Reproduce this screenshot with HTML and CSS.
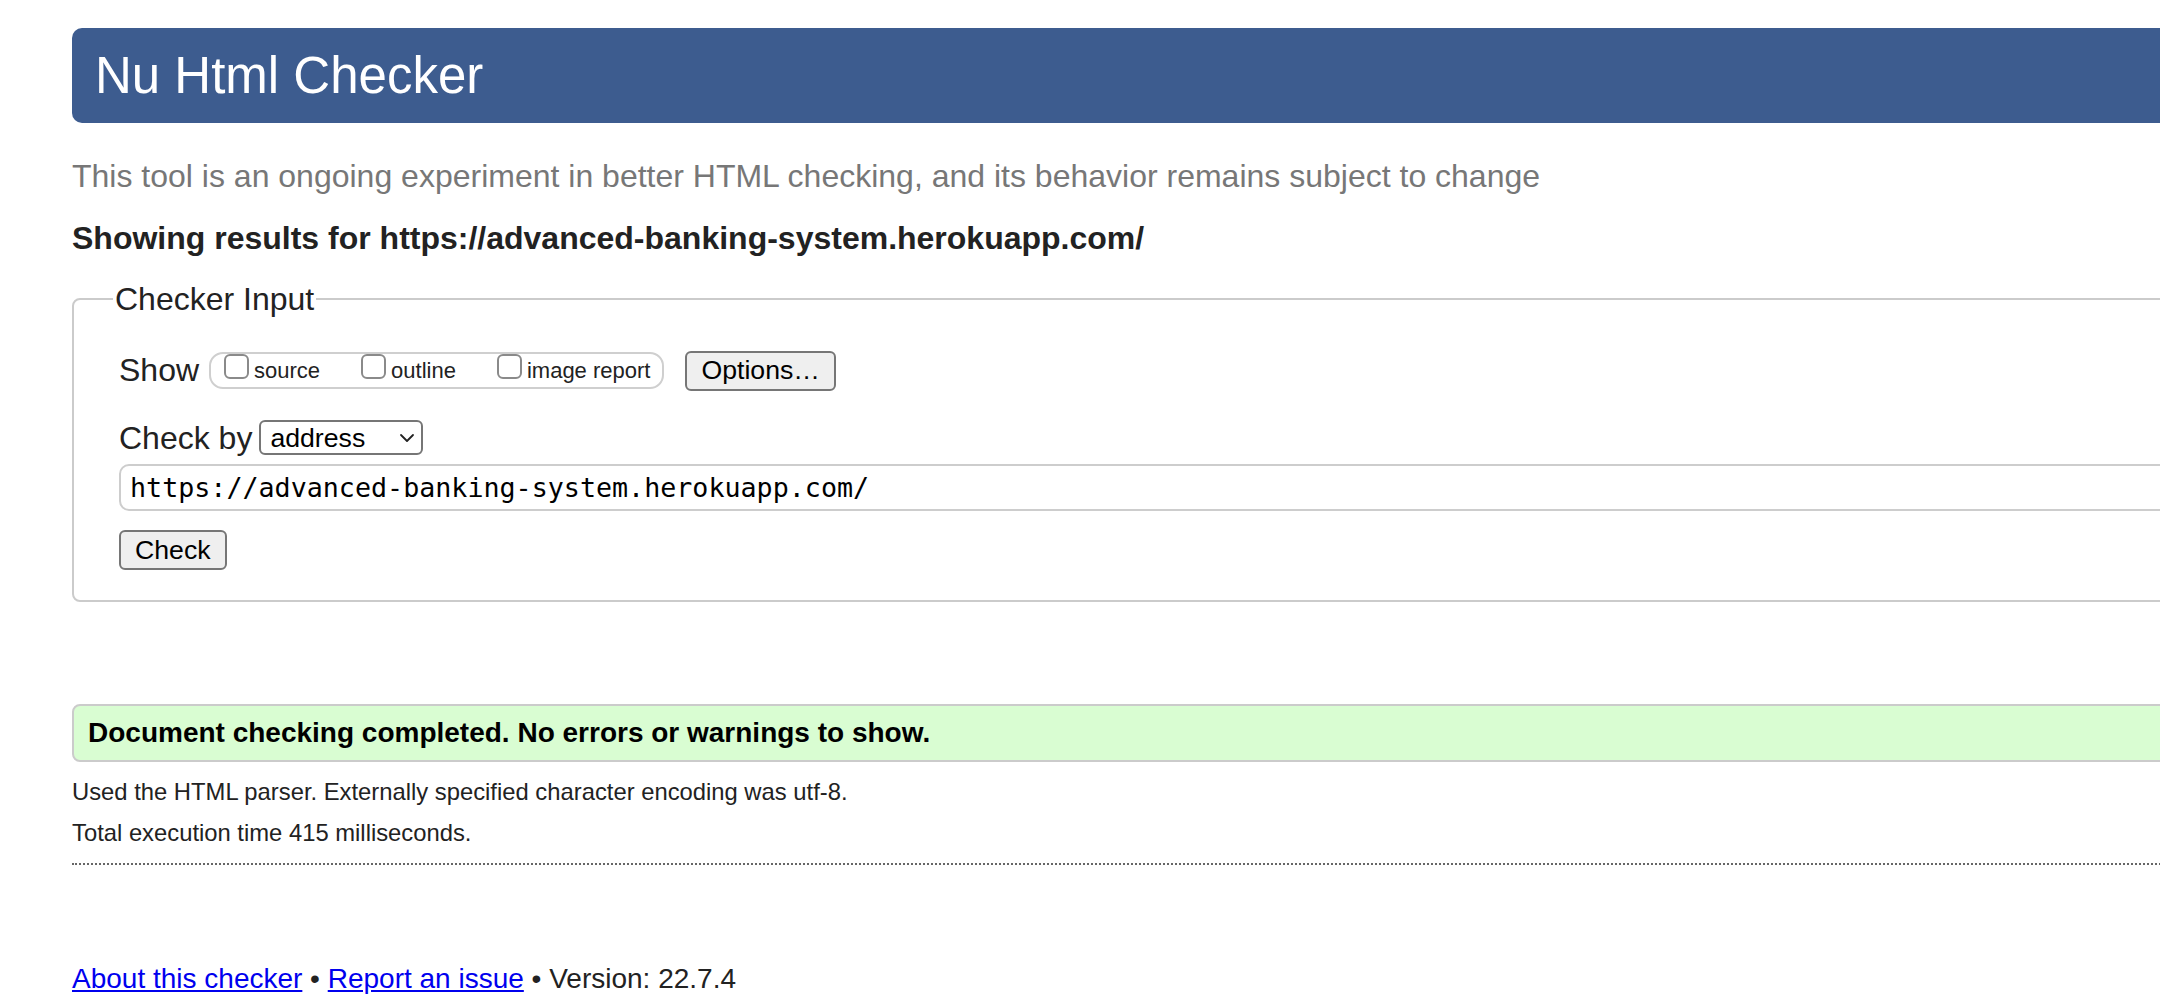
FILE: index.html
```html
<!DOCTYPE html>
<html lang="en">
<head>
<meta charset="utf-8">
<title>Showing results for https://advanced-banking-system.herokuapp.com/ - Nu Html Checker</title>
<link rel="stylesheet" href="styles.css">
</head>
<body>
<div class="page">
  <h1 class="title">Nu Html Checker</h1>
  <p class="intro">This tool is an ongoing experiment in better HTML checking, and its behavior remains subject to change</p>
  <h2 class="showing">Showing results for https://advanced-banking-system.herokuapp.com/</h2>
  <form class="checker-form">
    <fieldset class="checker-input">
      <legend class="checker-legend">Checker Input</legend>
      <div class="row show-row">
        <span class="row-label">Show</span>
        <fieldset class="opts">
          <label class="opt"><input type="checkbox" class="cb"><span class="opt-text">source</span></label>
          <label class="opt"><input type="checkbox" class="cb"><span class="opt-text">outline</span></label>
          <label class="opt"><input type="checkbox" class="cb"><span class="opt-text">image report</span></label>
        </fieldset>
        <button type="button" class="btn btn-options">Options…</button>
      </div>
      <div class="row by-row">
        <span class="row-label">Check by</span>
        <span class="select-wrap">
          <select class="select"><option>address</option></select>
          <svg class="chev" width="16" height="10" viewBox="0 0 16 10"><path d="M2 2 L8 8 L14 2" fill="none" stroke="#222" stroke-width="1.8" stroke-linecap="round" stroke-linejoin="round"/></svg>
        </span>
      </div>
      <div class="url-row">
        <input class="url" type="text" value="https://advanced-banking-system.herokuapp.com/">
      </div>
      <div class="check-row">
        <button type="button" class="btn btn-check">Check</button>
      </div>
    </fieldset>
  </form>
  <div class="success">Document checking completed. No errors or warnings to show.</div>
  <p class="details">Used the HTML parser. Externally specified character encoding was utf-8.</p>
  <p class="details details-2">Total execution time 415 milliseconds.</p>
  <hr class="dotted">
  <p class="footer"><a href="#about" class="flink">About this checker</a> • <a href="#issue" class="flink">Report an issue</a> • Version: 22.7.4</p>
</div>
</body>
</html>
```
FILE: styles.css
```css
html, body {
  margin: 0;
  padding: 0;
  background: #fff;
}
body {
  overflow: hidden;
  font-family: "Liberation Sans", Arial, Helvetica, sans-serif;
  font-size: 32px;
  line-height: 1.15;
  color: #222;
}
.page {
  margin-left: 72px;
  width: 2240px;
}
.title {
  margin: 28px 0 0;
  height: 95px;
  line-height: 95px;
  padding: 0 23px;
  font-size: 51px;
  font-weight: normal;
  color: #fff;
  background: #3d5c8f;
  border-radius: 10px;
}
.intro {
  margin: 34.5px 0 0;
  color: #777;
  font-size: 32px;
}
.showing {
  margin: 25.7px 0 0;
  font-size: 32px;
  font-weight: bold;
  color: #222;
}
.checker-form {
  margin: 24px 0 0;
}
.checker-input {
  margin: 0;
  border: 2px solid #cbcbcb;
  border-radius: 8px;
  padding: 33px 0 30px 45px;
  min-width: 0;
}
.checker-legend {
  padding: 0 2px;
  margin-left: -6px;
  font-size: 32px;
  line-height: 1.15;
  color: #222;
}
.row {
  display: flex;
  align-items: center;
}
.show-row {
  height: 40px;
}
.row-label {
  font-size: 32px;
  line-height: 1.15;
}
.opts {
  margin: 0 0 0 10px;
  padding: 0 12px 0 13px;
  height: 37px;
  box-sizing: border-box;
  border: 2px solid #cfcfcf;
  border-radius: 14px;
  display: flex;
  align-items: flex-start;
  gap: 41px;
  min-width: 0;
}
.opt {
  display: flex;
  align-items: flex-start;
}
.cb {
  appearance: none;
  -webkit-appearance: none;
  margin: 0;
  width: 25px;
  height: 25px;
  box-sizing: border-box;
  border: 2px solid #8a8a8a;
  border-radius: 6px;
  background: #fff;
}
.opt-text {
  font-size: 22px;
  line-height: 22px;
  margin: 6px 0 0 5px;
  color: #222;
}
.btn {
  font-family: "Liberation Sans", Arial, Helvetica, sans-serif;
  font-size: 26.67px;
  line-height: 1;
  color: #000;
  background: #efefef;
  border: 2px solid #767676;
  border-radius: 6px;
  height: 40px;
  box-sizing: border-box;
  padding: 0 14px;
}
.btn-options {
  margin-left: 21px;
}
.by-row {
  margin-top: 29px;
}
.select-wrap {
  position: relative;
  margin-left: 7px;
  display: inline-block;
}
.select {
  appearance: none;
  -webkit-appearance: none;
  width: 164px;
  height: 35px;
  box-sizing: border-box;
  border: 2px solid #767676;
  border-radius: 6px;
  background: #fff;
  font-family: "Liberation Sans", Arial, Helvetica, sans-serif;
  font-size: 26.67px;
  color: #000;
  padding: 0 0 0 9px;
  display: block;
}
.chev {
  position: absolute;
  right: 8px;
  top: 13px;
}
.url-row {
  margin-top: 7.5px;
}
.url {
  display: block;
  width: 2200px;
  height: 47px;
  box-sizing: border-box;
  border: 2px solid #cdcdcd;
  border-radius: 10px;
  padding: 0 9px;
  font-family: "DejaVu Sans Mono", "Liberation Mono", monospace;
  font-size: 26.7px;
  color: #000;
  background: #fff;
}
.check-row {
  margin-top: 19px;
}
.success {
  margin-top: 101.7px;
  height: 58px;
  box-sizing: border-box;
  border: 2px solid #cbcbcb;
  border-radius: 8px;
  background: #d9fdd2;
  padding: 0 14px;
  line-height: 54px;
  font-size: 28px;
  font-weight: bold;
  color: #000;
}
.details {
  margin: 16.5px 0 0;
  font-size: 23.8px;
  line-height: 27.6px;
  color: #222;
}
.details-2 {
  margin-top: 13.4px;
}
.dotted {
  margin: 16px 0 0;
  height: 0;
  border: 0;
  border-top: 2px dotted #666;
}
.footer {
  margin: 98px 0 0;
  font-size: 28px;
  line-height: 32.2px;
  color: #222;
}
.flink {
  color: #0000ee;
  text-decoration: underline;
}
```
